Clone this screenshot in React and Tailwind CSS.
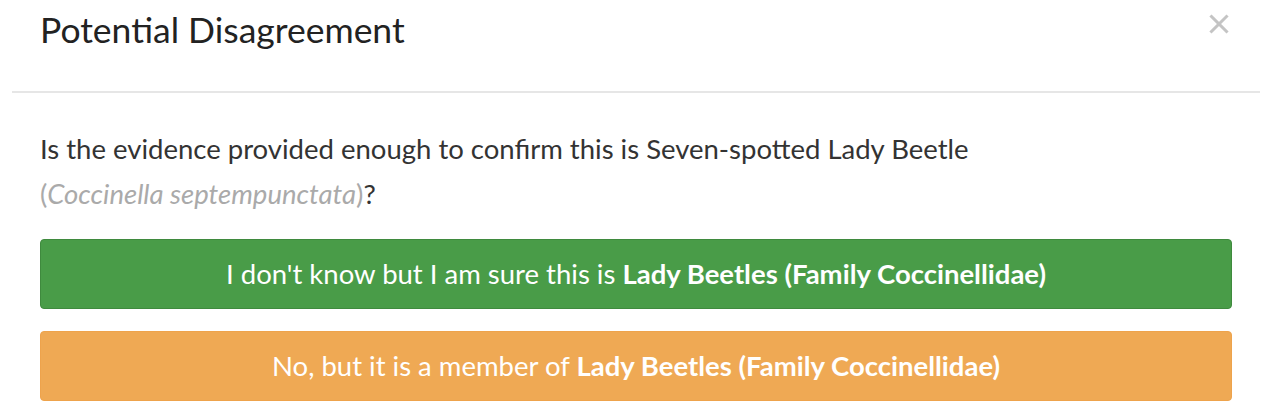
import React from 'react';

/**
 * AnswerButton Component
 * Full-width coloured choice button with a bold taxon name
 */
const AnswerButton = ({ className, lead, taxon }) => (
  <button
    type="button"
    className={`w-full h-[70px] rounded-[4px] border text-white text-[27.5px] text-center ${className}`}
  >
    {lead} <span className="font-bold">{taxon}</span>
  </button>
);

export default function App() {
  return (
    <div
      className="bg-white w-[1268px] h-[420px] pl-[12px] pr-[8px] text-[#333]"
      style={{ fontFamily: 'Lato, "Open Sans", sans-serif' }}
    >
      {/* Modal Header */}
      <div className="h-[93px] border-b-2 border-[#e6e6e6] pl-[28px] pr-[31px] flex items-start justify-between">
        <h2 className="mt-[10px] text-[35.5px] leading-[40px] text-[#222]">Potential Disagreement</h2>
        <button type="button" className="mt-[14px] text-[#c4c4c4]" aria-label="Close">
          <svg width="20" height="20" viewBox="0 0 20 20" stroke="currentColor" strokeWidth="3" strokeLinecap="square">
            <line x1="2.5" y1="2.5" x2="17.5" y2="17.5" />
            <line x1="17.5" y1="2.5" x2="2.5" y2="17.5" />
          </svg>
        </button>
      </div>

      {/* Modal Body */}
      <div className="pl-[28px] pr-[28px] pt-[33px]">
        <p className="text-[27.5px] leading-[45px]">
          Is the evidence provided enough to confirm this is Seven-spotted Lady Beetle{' '}
          <span className="whitespace-nowrap">
            <span className="text-[#aaa]">
              (<i>Coccinella septempunctata</i>)
            </span>
            ?
          </span>
        </p>

        <div className="mt-[23px] flex flex-col gap-[22px]">
          <AnswerButton
            className="bg-[#499c48] border-[#3f8a3e]"
            lead="I don't know but I am sure this is"
            taxon="Lady Beetles (Family Coccinellidae)"
          />
          <AnswerButton
            className="bg-[#efa954] border-[#eea34c]"
            lead="No, but it is a member of"
            taxon="Lady Beetles (Family Coccinellidae)"
          />
        </div>
      </div>
    </div>
  );
}
